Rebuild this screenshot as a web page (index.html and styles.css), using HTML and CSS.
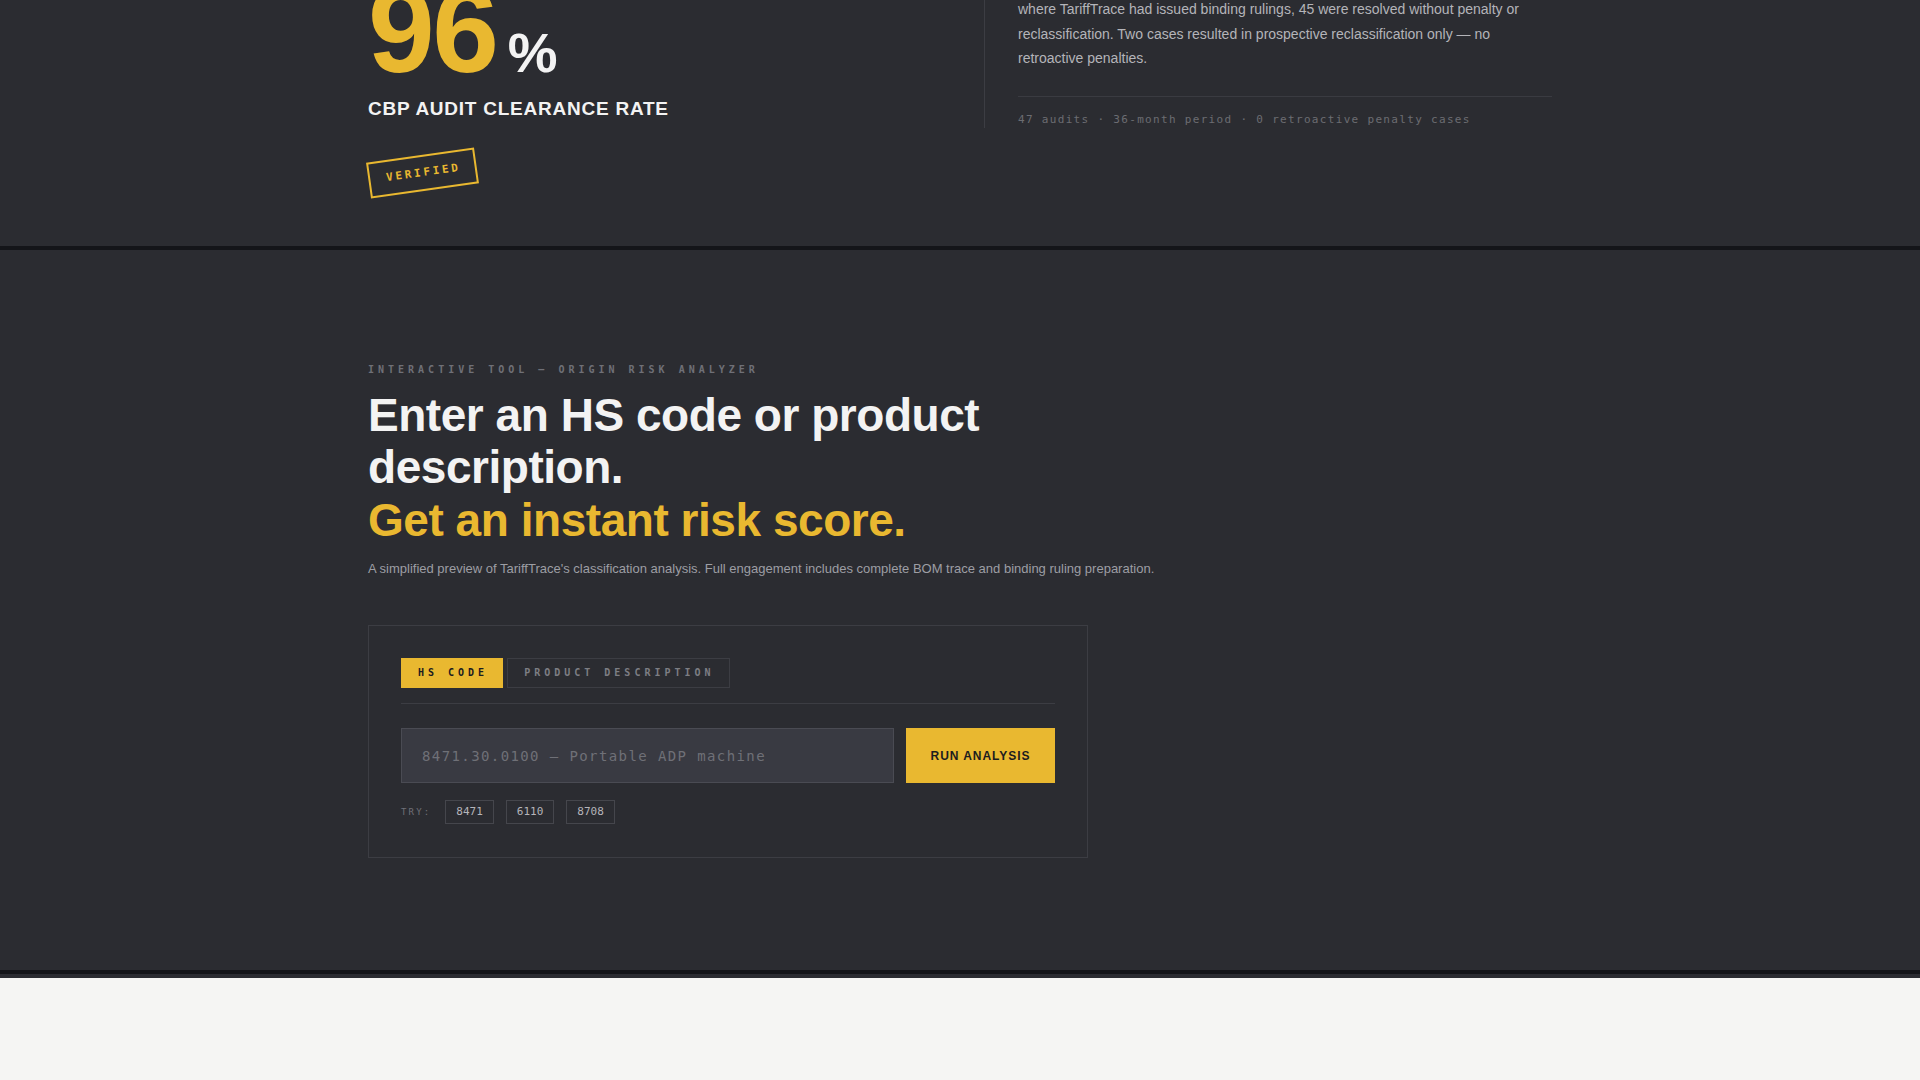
FILE: index.html
```html
<!DOCTYPE html>
<html lang="en">
<head>
<meta charset="utf-8">
<title>TariffTrace — Origin Risk Analyzer</title>
<link rel="stylesheet" href="styles.css">
</head>
<body>
<section class="stats">
  <div class="container stats-grid">
    <div class="stat-main">
      <div class="stat-number">96<span class="stat-pct">%</span></div>
      <div class="stat-label">CBP AUDIT CLEARANCE RATE</div>
      <div class="stamp">VERIFIED</div>
    </div>
    <div class="stat-detail">
      <p>where TariffTrace had issued binding rulings, 45 were resolved without penalty or reclassification. Two cases resulted in prospective reclassification only — no retroactive penalties.</p>
      <div class="meta">47 audits · 36-month period · 0 retroactive penalty cases</div>
    </div>
  </div>
</section>

<section class="tool">
  <div class="container">
    <div class="eyebrow">INTERACTIVE TOOL — ORIGIN RISK ANALYZER</div>
    <h2 class="tool-title">Enter an HS code or product description.<span class="accent">Get an instant risk score.</span></h2>
    <p class="lede">A simplified preview of TariffTrace's classification analysis. Full engagement includes complete BOM trace and binding ruling preparation.</p>
    <div class="analyzer">
      <div class="tabs">
        <button class="tab active">HS CODE</button>
        <button class="tab">PRODUCT DESCRIPTION</button>
      </div>
      <div class="query">
        <input class="query-input" type="text" placeholder="8471.30.0100 — Portable ADP machine">
        <button class="run">RUN ANALYSIS</button>
      </div>
      <div class="try">
        <span class="try-label">TRY:</span>
        <button class="chip">8471</button>
        <button class="chip">6110</button>
        <button class="chip">8708</button>
      </div>
    </div>
  </div>
</section>
<div class="band"></div>
<section class="light"></section>
</body>
</html>
```

FILE: styles.css
```css
html, body {
  margin: 0;
  padding: 0;
}
body {
  background: #2b2c31;
  font-family: "Liberation Sans", Arial, sans-serif;
  color: #f3f3f3;
}
.container {
  width: 1184px;
  margin: 0 auto;
}

/* ---------- stats ---------- */
.stats {
  overflow: hidden;
  padding-bottom: 55px;
  border-bottom: 4px solid #141519;
}
.stats-grid {
  display: grid;
  grid-template-columns: 1fr 1fr;
  gap: 48px;
  align-items: start;
}
.stat-number {
  font-size: 120px;
  font-weight: 700;
  line-height: 1;
  letter-spacing: -0.02em;
  color: #e9b830;
  margin-top: -30px;
  margin-bottom: 8px;
}
.stat-pct {
  font-size: 56px;
  letter-spacing: 0;
  color: #f3f3f3;
  margin-left: 11px;
}
.stat-label {
  font-size: 19px;
  font-weight: 700;
  line-height: 1.2;
  letter-spacing: 0.04em;
  color: #f3f3f3;
  margin-bottom: 34px;
}
.stamp {
  width: fit-content;
  border: 2px solid #e9b830;
  color: #e9b830;
  font-family: "DejaVu Sans Mono", monospace;
  font-weight: 700;
  font-size: 11px;
  line-height: 14px;
  letter-spacing: 0.25em;
  padding: 9px 14px 9px 16px;
  transform: rotate(-8deg);
}
.stat-detail {
  border-left: 1px solid #3c3d43;
  padding-left: 33px;
}
.stat-detail p {
  margin: -3px 0 0;
  font-size: 14px;
  line-height: 24.5px;
  color: #b4b4b9;
}
.meta {
  margin-top: 25px;
  border-top: 1px solid #3a3b41;
  padding-top: 15px;
  font-family: "DejaVu Sans Mono", monospace;
  font-size: 11px;
  line-height: 16px;
  letter-spacing: 0.12em;
  color: #6b6c72;
}

/* ---------- tool ---------- */
.tool {
  padding: 112px 0 112px;
  border-bottom: 4px solid #141519;
}
.eyebrow {
  font-family: "DejaVu Sans Mono", monospace;
  font-weight: 700;
  font-size: 10px;
  line-height: 16px;
  letter-spacing: 0.4em;
  color: #6f7077;
  margin-bottom: 11px;
}
.tool-title {
  margin: 0;
  max-width: 760px;
  font-size: 46px;
  line-height: 52.5px;
  font-weight: 700;
  letter-spacing: -0.01em;
  color: #f3f3f3;
}
.accent {
  display: block;
  color: #e9b830;
}
.lede {
  margin: 13px 0 45px;
  font-size: 13px;
  line-height: 20.8px;
  color: #9d9ea4;
}
.analyzer {
  width: 720px;
  box-sizing: border-box;
  border: 1px solid #3c3d43;
  padding: 32px 32px 33px;
}
.tabs {
  display: flex;
  gap: 4px;
  padding-bottom: 15px;
  border-bottom: 1px solid #3c3d43;
  margin-bottom: 24px;
}
.tab {
  font-family: "DejaVu Sans Mono", monospace;
  font-weight: 700;
  font-size: 10px;
  line-height: 14px;
  letter-spacing: 0.4em;
  padding: 7px 14px 7px 16px;
  border: 1px solid #3c3d43;
  background: transparent;
  color: #7d7e84;
  margin: 0;
}
.tab.active {
  background: #e9b830;
  border-color: #e9b830;
  color: #1c1c1f;
}
.query {
  display: flex;
  gap: 12px;
}
.query-input {
  flex: 1;
  min-width: 0;
  height: 55px;
  box-sizing: border-box;
  margin: 0;
  background: #393a42;
  border: 1px solid #4a4b53;
  padding: 0 20px;
  font-family: "DejaVu Sans Mono", monospace;
  font-size: 14px;
  letter-spacing: 0.1em;
  color: #d0d0d4;
  outline: none;
}
.query-input::placeholder {
  color: #6f7077;
}
.run {
  width: 149px;
  margin: 0;
  border: 0;
  background: #e9b830;
  font-family: "Liberation Sans", Arial, sans-serif;
  font-weight: 700;
  font-size: 12px;
  letter-spacing: 0.08em;
  color: #1c1c1f;
}
.try {
  display: flex;
  align-items: center;
  gap: 12px;
  margin-top: 17px;
}
.try-label {
  font-family: "DejaVu Sans Mono", monospace;
  font-size: 9px;
  letter-spacing: 0.24em;
  color: #6f7077;
  margin-right: 2px;
}
.chip {
  margin: 0;
  height: 24px;
  box-sizing: border-box;
  padding: 0 10px;
  border: 1px solid #45464c;
  background: transparent;
  font-family: "DejaVu Sans Mono", monospace;
  font-size: 11px;
  line-height: 22px;
  color: #b5b5ba;
}

/* ---------- bottom ---------- */
.band {
  height: 4px;
  background: #2b2c31;
}
.light {
  height: 200px;
  background: #f5f5f3;
}
```
